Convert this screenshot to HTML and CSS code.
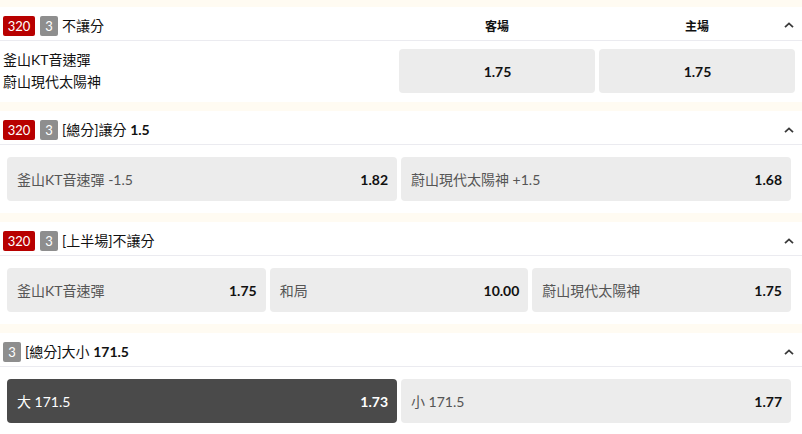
FILE: index.html
```html
<!DOCTYPE html>
<html>
<head>
  <meta name="viewport" content="width=device-width, initial-scale=1.0">
  <link rel="stylesheet" href="styles.css">
</head>

<body>
  <section class="market">
    <div class="market-head head-cols">
      <div class="head-left">
        <span class="badge red">320</span><span class="badge gray">3</span>
        <span class="title">不讓分</span>
      </div>
      <span class="col-label">客場</span>
      <span class="col-label">主場</span>
      <svg class="chev chev-over" width="10" height="6" viewBox="0 0 10 6"><path d="M1 5.2 L5 1.4 L9 5.2" fill="none" stroke="#3a3a3a" stroke-width="1.8"/></svg>
    </div>
    <div class="match">
      <div class="teams">
        <div>釜山KT音速彈</div>
        <div>蔚山現代太陽神</div>
      </div>
      <div class="odd center"><b>1.75</b></div>
      <div class="odd center"><b>1.75</b></div>
    </div>
  </section>

  <section class="market">
    <div class="market-head">
      <span class="badge red">320</span><span class="badge gray">3</span>
      <span class="title">[總分]讓分 <b>1.5</b></span>
      <svg class="chev" width="10" height="6" viewBox="0 0 10 6"><path d="M1 5.2 L5 1.4 L9 5.2" fill="none" stroke="#3a3a3a" stroke-width="1.8"/></svg>
    </div>
    <div class="options two">
      <div class="odd"><span class="label">釜山KT音速彈 -1.5</span><b>1.82</b></div>
      <div class="odd"><span class="label">蔚山現代太陽神 +1.5</span><b>1.68</b></div>
    </div>
  </section>

  <section class="market">
    <div class="market-head">
      <span class="badge red">320</span><span class="badge gray">3</span>
      <span class="title">[上半場]不讓分</span>
      <svg class="chev" width="10" height="6" viewBox="0 0 10 6"><path d="M1 5.2 L5 1.4 L9 5.2" fill="none" stroke="#3a3a3a" stroke-width="1.8"/></svg>
    </div>
    <div class="options three">
      <div class="odd"><span class="label">釜山KT音速彈</span><b>1.75</b></div>
      <div class="odd"><span class="label">和局</span><b>10.00</b></div>
      <div class="odd"><span class="label">蔚山現代太陽神</span><b>1.75</b></div>
    </div>
  </section>

  <section class="market">
    <div class="market-head">
      <span class="badge gray">3</span>
      <span class="title">[總分]大小 <b>171.5</b></span>
      <svg class="chev" width="10" height="6" viewBox="0 0 10 6"><path d="M1 5.2 L5 1.4 L9 5.2" fill="none" stroke="#3a3a3a" stroke-width="1.8"/></svg>
    </div>
    <div class="options two">
      <div class="odd selected"><span class="label">大 171.5</span><b>1.73</b></div>
      <div class="odd"><span class="label">小 171.5</span><b>1.77</b></div>
    </div>
  </section>
</body>
</html>
```

FILE: styles.css
```css
body {
  margin: 0;
  padding-top: 7px;
  background-color: #fffbf2;
  font-family: Lato, "Noto Sans CJK TC", sans-serif;
  font-size: 14px;
  color: #111;
}

.market {
  background: #fff;
  margin-bottom: 9px;
}

.market-head {
  display: flex;
  align-items: center;
  padding: 4px 8px 0 3px;
  box-sizing: border-box;
  border-bottom: 1px solid #ebebf0;
  height: 34px;
}

.head-cols {
  display: grid;
  grid-template-columns: 1fr 196px 196px;
  column-gap: 4px;
  padding-right: 7px;
  position: relative;
}

.head-left {
  display: flex;
  align-items: center;
}

.col-label {
  text-align: center;
  font-size: 12px;
  font-weight: bold;
}

.badge {
  display: inline-block;
  height: 20px;
  line-height: 20px;
  border-radius: 2px;
  color: #fff;
  font-size: 13px;
  text-align: center;
  margin-right: 5px;
}

.red {
  background: #b80000;
  width: 32px;
}

.gray {
  background: #8e8e8e;
  width: 18px;
  margin-right: 4px;
}

.title {
  line-height: 20px;
}

.chev {
  margin-left: auto;
}

.chev-over {
  position: absolute;
  right: 8px;
  top: 15px;
}

.match {
  display: grid;
  grid-template-columns: 1fr 196px 196px;
  column-gap: 4px;
  padding: 8px 7px 9px 3px;
}

.teams {
  display: flex;
  flex-direction: column;
  justify-content: center;
  line-height: 22px;
}

.options {
  display: grid;
  column-gap: 4px;
  padding: 12px 11px 12px 7px;
}

.two {
  grid-template-columns: 1fr 1fr;
}

.three {
  grid-template-columns: 1fr 1fr 1fr;
}

.odd {
  display: flex;
  align-items: center;
  justify-content: space-between;
  height: 44px;
  padding: 0 9px 0 10px;
  background: #ececec;
  border-radius: 4px;
}

.odd.center {
  justify-content: center;
}

.label {
  color: #555;
}

.selected {
  background: #4a4a4a;
  color: #fff;
}

.selected .label {
  color: #fff;
}
```
